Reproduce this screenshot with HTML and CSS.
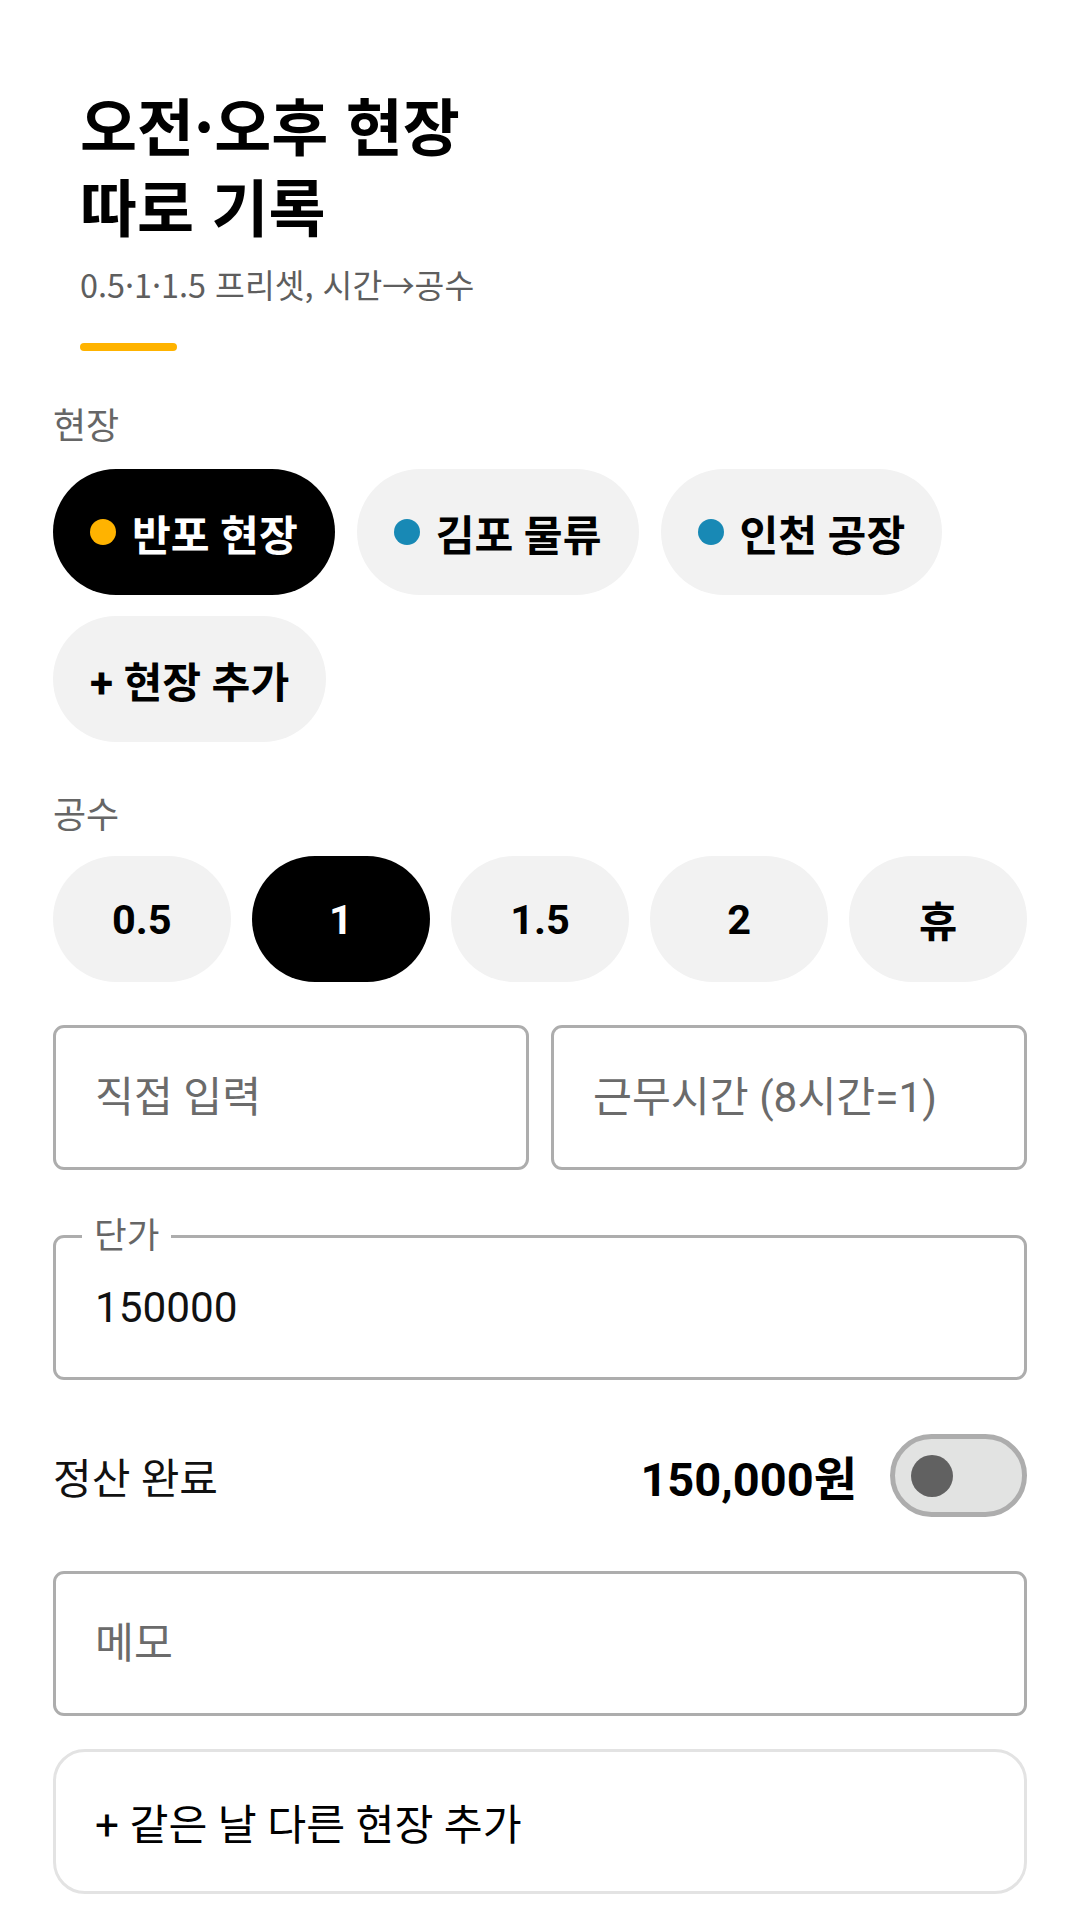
FILE: index.html
```html
<!DOCTYPE html>
<html lang="ko">
<head>
<meta charset="utf-8">
<title>오전·오후 현장 따로 기록</title>
<link rel="stylesheet" href="styles.css">
</head>
<body>
<main class="page">
  <header class="header">
    <h1 class="title"><span class="title-line">오전·오후 현장</span><span class="title-line">따로 기록</span></h1>
    <p class="subtitle">0.5·1·1.5 프리셋, 시간→공수</p>
    <div class="accent"></div>
  </header>

  <section class="section section-sites">
    <div class="label">현장</div>
    <div class="chips">
      <button class="chip chip-active"><span class="dot dot-yellow"></span>반포 현장</button>
      <button class="chip"><span class="dot dot-blue"></span>김포 물류</button>
      <button class="chip"><span class="dot dot-blue"></span>인천 공장</button>
      <button class="chip">+ 현장 추가</button>
    </div>
  </section>

  <section class="section section-count">
    <div class="label">공수</div>
    <div class="presets">
      <button class="preset">0.5</button>
      <button class="preset preset-active">1</button>
      <button class="preset">1.5</button>
      <button class="preset">2</button>
      <button class="preset">휴</button>
    </div>
  </section>

  <div class="input-row">
    <input class="field" type="text" placeholder="직접 입력">
    <input class="field" type="text" placeholder="근무시간 (8시간=1)">
  </div>

  <div class="outlined">
    <span class="outlined-label">단가</span>
    <input class="outlined-input" type="text" value="150000">
  </div>

  <div class="settle-row">
    <span class="settle-label">정산 완료</span>
    <div class="settle-right">
      <span class="amount">150,000원</span>
      <div class="switch"><span class="knob"></span></div>
    </div>
  </div>

  <input class="field field-memo" type="text" placeholder="메모">

  <button class="add-site">+ 같은 날 다른 현장 추가</button>
</main>
</body>
</html>
```

FILE: styles.css
```css
* { box-sizing: border-box; }

html, body {
  margin: 0;
  padding: 0;
  background: #ffffff;
}

body {
  font-family: Roboto, "Noto Sans CJK KR", sans-serif;
  color: #000000;
}

.page {
  width: 1080px;
  padding: 0 53px;
  display: flex;
  flex-direction: column;
}

/* Header */
.header {
  padding: 84px 0 0 27px;
  font-family: "Noto Sans CJK KR", sans-serif;
}

.title {
  margin: 0;
  font-size: 62px;
  line-height: 81px;
  font-weight: 700;
  color: #000000;
  display: flex;
  flex-direction: column;
}

.title-line {
  display: block;
  height: 81px;
}

.subtitle {
  margin: 16px 0 0;
  font-size: 32.4px;
  line-height: 44px;
  font-weight: 400;
  color: #5e5e5e;
}

.accent {
  margin-top: 37px;
  width: 97px;
  height: 8px;
  border-radius: 4px;
  background: #ffb300;
}

/* Sections */
.label {
  font-size: 36px;
  line-height: 44px;
  color: #666666;
  margin-bottom: 20px;
}

.section-sites { margin-top: 54px; }
.section-count { margin-top: 52px; }
.section-count .label { margin-bottom: 18px; }

.chips {
  display: flex;
  flex-wrap: wrap;
  gap: 21px 22px;
}

.chip,
.preset {
  font-family: Roboto, "Noto Sans CJK KR", sans-serif;
  height: 126px;
  border: none;
  border-radius: 63px;
  background: #f2f2f2;
  color: #000000;
  font-size: 42.2px;
  font-weight: 700;
  display: inline-flex;
  align-items: center;
  justify-content: center;
  padding: 0 37px;
  margin: 0;
}

.chip { gap: 16px; }

.chip-active,
.preset-active {
  background: #000000;
  color: #ffffff;
}

.dot {
  width: 26px;
  height: 26px;
  border-radius: 50%;
  flex: none;
}
.dot-yellow { background: #ffb300; }
.dot-blue { background: #1889b5; }

.presets {
  display: flex;
  gap: 21.5px;
}

.preset {
  flex: 1 1 0;
  padding: 0;
  font-size: 41.5px;
}

/* Inputs */
.input-row {
  margin-top: 43px;
  display: flex;
  gap: 22px;
}

.field,
.outlined-input {
  font-family: Roboto, "Noto Sans CJK KR", sans-serif;
  font-size: 42.3px;
  color: #111111;
}

.field {
  flex: 1 1 0;
  min-width: 0;
  height: 145px;
  border: 3px solid #adadad;
  border-radius: 11px;
  padding: 0 0 0 39px;
  background: #ffffff;
  outline: none;
}

.field::placeholder { color: #6b6b6b; opacity: 1; }

.outlined {
  position: relative;
  margin-top: 65px;
  height: 145px;
  border: 3px solid #adadad;
  border-radius: 11px;
  display: flex;
  align-items: center;
  padding-left: 39px;
}

.outlined-label {
  position: absolute;
  top: -24px;
  left: 26px;
  padding: 0 12px;
  background: #ffffff;
  font-size: 35.5px;
  line-height: 44px;
  color: #666666;
}

.outlined-input {
  border: none;
  outline: none;
  padding: 0;
  width: 100%;
  height: 60px;
  background: transparent;
}

/* Settle row */
.settle-row {
  margin-top: 54px;
  height: 83px;
  display: flex;
  align-items: center;
  justify-content: space-between;
}

.settle-label {
  font-size: 42px;
  color: #111111;
}

.settle-right {
  display: flex;
  align-items: center;
  gap: 33px;
}

.amount {
  font-size: 47px;
  font-weight: 700;
  color: #000000;
}

.switch {
  width: 137px;
  height: 83px;
  border: 5.4px solid #adadad;
  border-radius: 42px;
  background: #e2e3e2;
  display: flex;
  align-items: center;
  padding-left: 16px;
}

.knob {
  width: 42px;
  height: 42px;
  border-radius: 50%;
  background: #616161;
}

.field-memo {
  flex: none;
  margin-top: 54px;
  width: 100%;
}

.add-site {
  margin-top: 33px;
  height: 145px;
  border: 3px solid #e3e3e3;
  border-radius: 32px;
  background: #ffffff;
  text-align: left;
  padding: 0 0 0 39px;
  font-family: Roboto, "Noto Sans CJK KR", sans-serif;
  font-size: 42.3px;
  color: #000000;
}
```
